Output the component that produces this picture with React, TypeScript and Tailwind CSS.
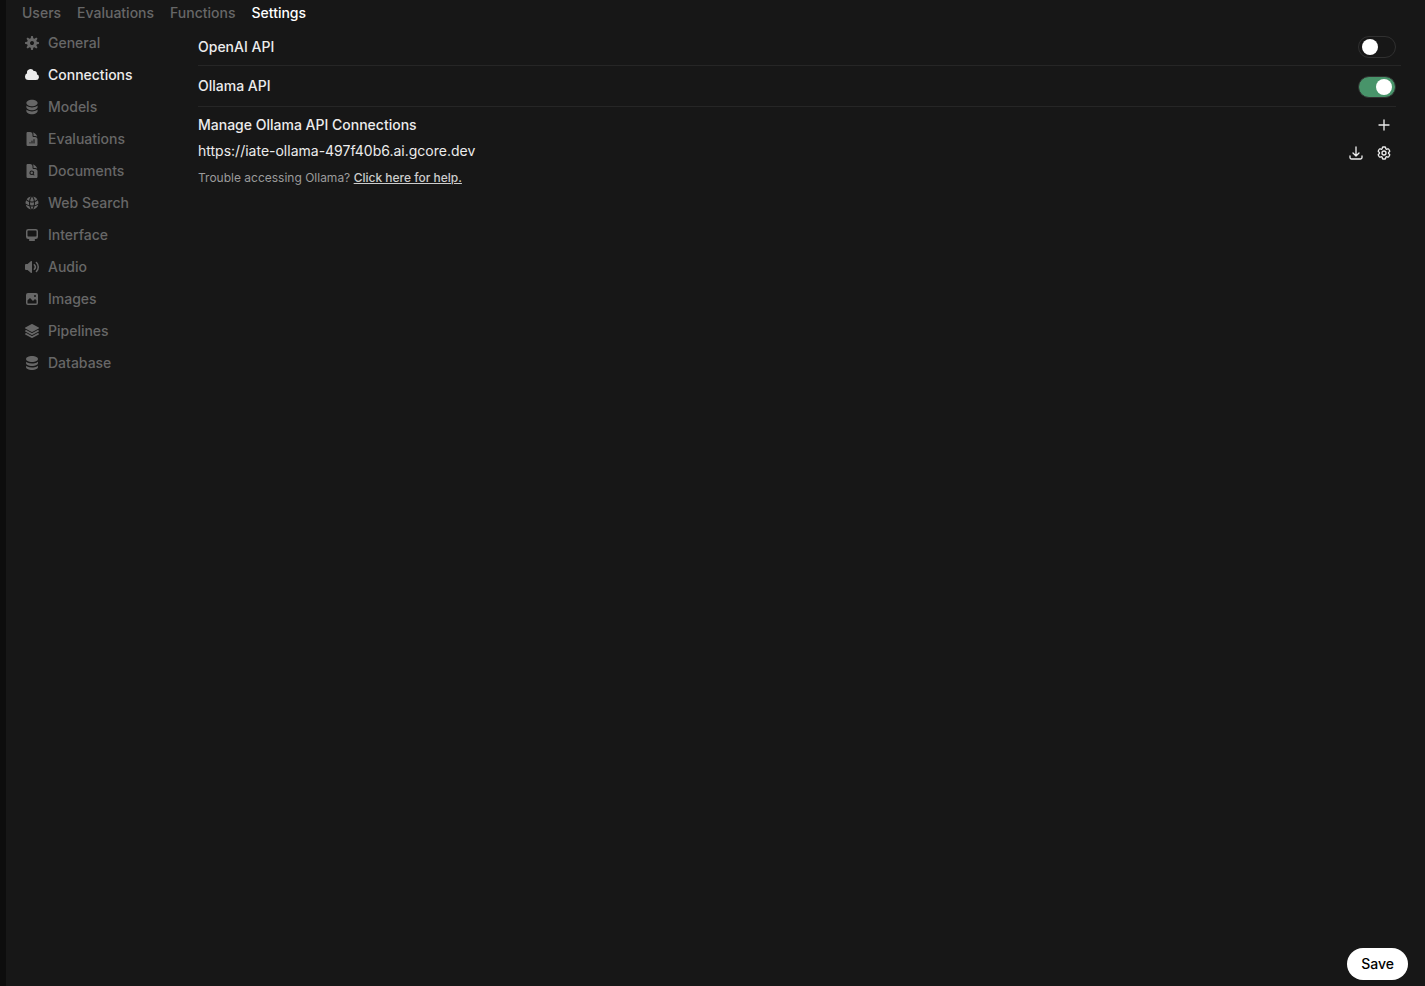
import { useState } from "react";
import type { ReactNode } from "react";
import { HiDocumentChartBar, HiDocumentMagnifyingGlass, HiGlobeAlt, HiMiniCircleStack, HiOutlineArrowDownTray, HiOutlineCog6Tooth, HiOutlinePlus, HiSquare3Stack3D } from "react-icons/hi2";

const NAV = ["Users", "Evaluations", "Functions", "Settings"];

const TABS: { id: string; label: string; icon: ReactNode }[] = [
  { id: "general", label: "General", icon: <Micro paths={["M6.955 1.45A.5.5 0 0 1 7.452 1h1.096a.5.5 0 0 1 .497.45l.17 1.699c.484.12.94.312 1.356.562l1.321-1.081a.5.5 0 0 1 .67.033l.774.775a.5.5 0 0 1 .034.67l-1.08 1.32c.25.417.44.873.561 1.357l1.699.17a.5.5 0 0 1 .45.497v1.096a.5.5 0 0 1-.45.497l-1.699.17c-.12.484-.312.94-.562 1.356l1.082 1.322a.5.5 0 0 1-.034.67l-.774.774a.5.5 0 0 1-.67.033l-1.322-1.08c-.416.25-.872.44-1.356.561l-.17 1.699a.5.5 0 0 1-.497.45H7.452a.5.5 0 0 1-.497-.45l-.17-1.699a4.973 4.973 0 0 1-1.356-.562L4.108 13.37a.5.5 0 0 1-.67-.033l-.774-.775a.5.5 0 0 1-.034-.67l1.08-1.32a4.971 4.971 0 0 1-.561-1.357l-1.699-.17A.5.5 0 0 1 1 8.548V7.452a.5.5 0 0 1 .45-.497l1.699-.17c.12-.484.312-.94.562-1.356L2.629 4.107a.5.5 0 0 1 .034-.67l.774-.774a.5.5 0 0 1 .67-.033L5.43 3.71a4.97 4.97 0 0 1 1.356-.561l.17-1.699ZM6 8c0 .538.212 1.026.558 1.385l.057.057a2 2 0 0 0 2.828-2.828l-.058-.056A2 2 0 0 0 6 8Z"]} /> },
  { id: "connections", label: "Connections", icon: <Micro paths={["M1 9.5A3.5 3.5 0 0 0 4.5 13H12a3 3 0 0 0 .917-5.857 2.503 2.503 0 0 0-3.198-3.019 3.5 3.5 0 0 0-6.628 2.171A3.5 3.5 0 0 0 1 9.5Z"]} /> },
  { id: "models", label: "Models", icon: <HiMiniCircleStack className="size-4" /> },
  { id: "evaluations", label: "Evaluations", icon: <HiDocumentChartBar className="size-4" /> },
  { id: "documents", label: "Documents", icon: <HiDocumentMagnifyingGlass className="size-4" /> },
  { id: "web", label: "Web Search", icon: <HiGlobeAlt className="size-4" /> },
  { id: "interface", label: "Interface", icon: <Micro paths={["M2 4.25A2.25 2.25 0 0 1 4.25 2h7.5A2.25 2.25 0 0 1 14 4.25v5.5A2.25 2.25 0 0 1 11.75 12h-1.312c.1.128.21.248.328.36a.75.75 0 0 1 .234.545v.345a.75.75 0 0 1-.75.75h-4.5a.75.75 0 0 1-.75-.75v-.345a.75.75 0 0 1 .234-.545c.118-.111.228-.232.328-.36H4.25A2.25 2.25 0 0 1 2 9.75v-5.5Zm2.25-.75a.75.75 0 0 0-.75.75v4.5c0 .414.336.75.75.75h7.5a.75.75 0 0 0 .75-.75v-4.5a.75.75 0 0 0-.75-.75h-7.5Z"]} /> },
  { id: "audio", label: "Audio", icon: <Micro paths={["M7.557 2.066A.75.75 0 0 1 8 2.75v10.5a.75.75 0 0 1-1.248.56L3.59 11H2a1 1 0 0 1-1-1V6a1 1 0 0 1 1-1h1.59l3.162-2.81a.75.75 0 0 1 .805-.124ZM12.95 3.05a.75.75 0 1 0-1.06 1.06 5.5 5.5 0 0 1 0 7.78.75.75 0 1 0 1.06 1.06 7 7 0 0 0 0-9.9Z", "M10.828 5.172a.75.75 0 1 0-1.06 1.06 2.5 2.5 0 0 1 0 3.536.75.75 0 1 0 1.06 1.06 4 4 0 0 0 0-5.656Z"]} /> },
  { id: "images", label: "Images", icon: <Micro paths={["M2 4a2 2 0 0 1 2-2h8a2 2 0 0 1 2 2v8a2 2 0 0 1-2 2H4a2 2 0 0 1-2-2V4Zm10.5 5.707a.5.5 0 0 0-.146-.353l-1-1a.5.5 0 0 0-.708 0L9.354 9.646a.5.5 0 0 1-.708 0L6.354 7.354a.5.5 0 0 0-.708 0l-2 2a.5.5 0 0 0-.146.353V12a.5.5 0 0 0 .5.5h8a.5.5 0 0 0 .5-.5V9.707ZM12 5a1 1 0 1 1-2 0 1 1 0 0 1 2 0Z"]} /> },
  { id: "pipelines", label: "Pipelines", icon: <HiSquare3Stack3D className="size-4" /> },
  { id: "database", label: "Database", icon: <Micro paths={["M8 7c3.314 0 6-1.343 6-3s-2.686-3-6-3-6 1.343-6 3 2.686 3 6 3Z", "M8 8.5c1.84 0 3.579-.37 4.914-1.037A6.33 6.33 0 0 0 14 6.78V8c0 1.657-2.686 3-6 3S2 9.657 2 8V6.78c.346.273.72.5 1.087.683C4.42 8.131 6.16 8.5 8 8.5Z", "M8 12.5c1.84 0 3.579-.37 4.914-1.037.366-.183.74-.41 1.086-.684V12c0 1.657-2.686 3-6 3s-6-1.343-6-3v-1.22c.346.273.72.5 1.087.683C4.42 12.131 6.16 12.5 8 12.5Z"]} /> },
];

export default function App() {
  const [tab, setTab] = useState("connections");
  const [openai, setOpenai] = useState(false);
  const [ollama, setOllama] = useState(true);
  const [url, setUrl] = useState("https://iate-ollama-497f40b6.ai.gcore.dev");

  return (
    <div className="flex min-h-screen flex-col border-l-6 border-[#0d0d0d] bg-[#171717] font-['Inter',sans-serif] text-sm text-[#ececec]">
      <nav className="flex gap-4 px-4 pt-[3px] font-medium">
        {NAV.map((n) => <a key={n} href="#" className={n === "Settings" ? "text-white" : "text-[#676767] hover:text-white"}>{n}</a>)}
      </nav>

      <div className="flex flex-1 pt-1">
        <div role="tablist" aria-orientation="vertical" className="flex w-44 flex-none flex-col pl-4">
          {TABS.map((t) => (
            <button key={t.id} type="button" role="tab" aria-selected={tab === t.id} onClick={() => setTab(t.id)} className={`flex h-8 items-center gap-2 px-0.5 text-left font-medium ${tab === t.id ? "text-[#ececec]" : "text-[#676767] hover:text-white"}`}>
              {t.icon}
              {t.label}
            </button>
          ))}
        </div>

        <form onSubmit={(e) => e.preventDefault()} className="flex min-w-0 flex-1 flex-col justify-between pr-4 pb-1.5 pl-4">
          <div className="pr-2">
            <div className="flex h-[39px] items-center justify-between border-b border-[#262626] pt-0.5 pr-[5px]">
              <label htmlFor="openai" className="font-medium">OpenAI API</label>
              <Switch id="openai" checked={openai} onChange={setOpenai} />
            </div>

            <div className="pr-[5px]">
              <div className="flex h-[41px] items-start justify-between border-b border-[#262626] pt-2.5">
                <label htmlFor="ollama" className="font-medium">Ollama API</label>
                <Switch id="ollama" checked={ollama} onChange={setOllama} />
              </div>

              <div className="mt-2 flex items-center justify-between">
                <h2 className="font-medium">Manage Ollama API Connections</h2>
                <button type="button" aria-label="Add connection" className="px-1"><HiOutlinePlus className="size-4" strokeWidth={2} /></button>
              </div>

              <div className="mt-1.5 flex items-start gap-1">
                <input aria-label="Ollama base URL" className="min-w-0 flex-1 bg-transparent outline-none" value={url} onChange={(e) => setUrl(e.target.value)} />
                <button type="button" aria-label="Manage models" className="p-1"><HiOutlineArrowDownTray className="size-4" strokeWidth={2} /></button>
                <button type="button" aria-label="Configure connection" className="p-1"><HiOutlineCog6Tooth className="size-4" strokeWidth={2} /></button>
              </div>

              <p className="mt-[5px] text-xs text-[#9b9b9b]">
                Trouble accessing Ollama? <a href="#" className="font-medium text-[#cdcdcd] underline">Click here for help.</a>
              </p>
            </div>
          </div>

          <div className="flex justify-end pr-px">
            <button type="submit" className="rounded-full bg-white px-3.5 py-1.5 font-medium text-black hover:bg-gray-100">Save</button>
          </div>
        </form>
      </div>
    </div>
  );
}

function Switch({ id, checked, onChange }: { id: string; checked: boolean; onChange: (v: boolean) => void }) {
  return (
    <span className="grid items-center">
      <input id={id} type="checkbox" role="switch" checked={checked} onChange={(e) => onChange(e.target.checked)} className="peer col-start-1 row-start-1 h-[22px] w-[38px] cursor-pointer appearance-none rounded-full border border-[#303030] checked:bg-[#48946a]" />
      <span className="pointer-events-none col-start-1 row-start-1 ml-1 size-4 rounded-full bg-white peer-checked:ml-[18px]" />
    </span>
  );
}

function Micro({ paths }: { paths: string[] }) {
  return (
    <svg viewBox="0 0 16 16" fill="currentColor" className="size-4" aria-hidden="true">
      {paths.map((d) => <path key={d} fillRule="evenodd" clipRule="evenodd" d={d} />)}
    </svg>
  );
}
